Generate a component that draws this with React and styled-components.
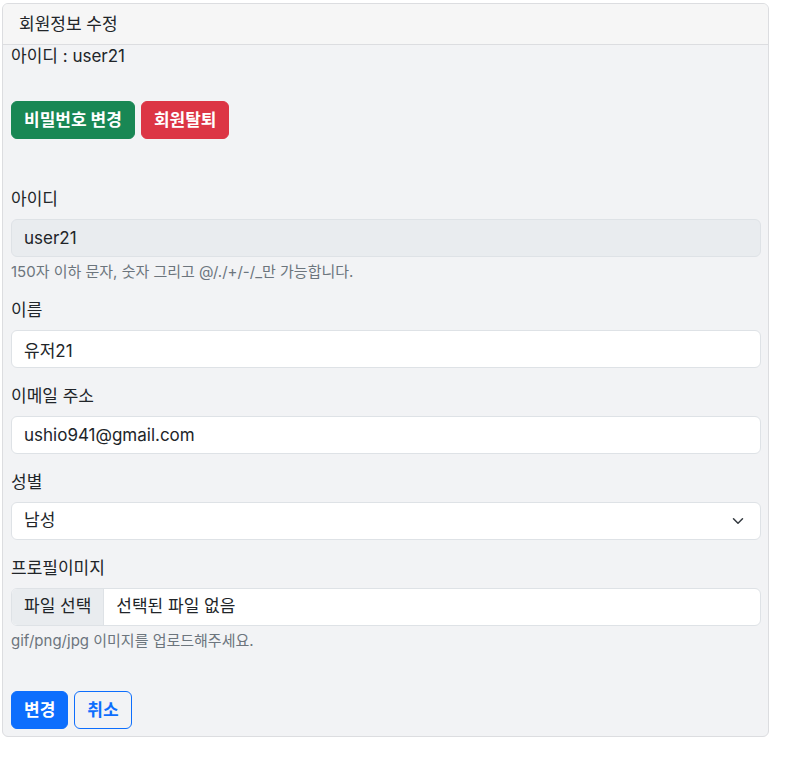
import styled, { createGlobalStyle } from "styled-components";

const GlobalStyle = createGlobalStyle`
  * {
    box-sizing: border-box;
  }
  body {
    margin: 0;
    background: #ffffff;
    color: #212529;
    font-family: Inter, "Noto Sans CJK KR", sans-serif;
    font-size: 17px;
    line-height: 1.5;
  }
`;

const App = () => {
  return (
    <Page>
      <GlobalStyle />
      <Card>
        <CardHeader>회원정보 수정</CardHeader>
        <CardBody>
          <UserLine>아이디 : user21</UserLine>
          <ActionRow>
            <Button $variant="success">비밀번호 변경</Button>
            <Button $variant="danger">회원탈퇴</Button>
          </ActionRow>

          <Field>
            <Label>아이디</Label>
            <Input value="user21" disabled readOnly />
            <Help>150자 이하 문자, 숫자 그리고 @/./+/-/_만 가능합니다.</Help>
          </Field>
          <Field>
            <Label>이름</Label>
            <Input value="유저21" readOnly />
          </Field>
          <Field>
            <Label>이메일 주소</Label>
            <Input value="ushio941@gmail.com" readOnly />
          </Field>
          <Field>
            <Label>성별</Label>
            <SelectBox>
              <span>남성</span>
              <svg width="16" height="16" viewBox="0 0 16 16">
                <path
                  d="M2 5l6 6 6-6"
                  fill="none"
                  stroke="#343a40"
                  strokeWidth="2"
                  strokeLinecap="round"
                  strokeLinejoin="round"
                />
              </svg>
            </SelectBox>
          </Field>
          <Field>
            <Label>프로필이미지</Label>
            <FileInput>
              <FileButton>파일 선택</FileButton>
              <FileName>선택된 파일 없음</FileName>
            </FileInput>
            <Help>gif/png/jpg 이미지를 업로드해주세요.</Help>
          </Field>

          <SubmitRow>
            <Button $variant="primary">변경</Button>
            <Button $variant="outline">취소</Button>
          </SubmitRow>
        </CardBody>
      </Card>
    </Page>
  );
};

const colors = {
  success: { bg: "#198754", fg: "#ffffff", border: "#198754" },
  danger: { bg: "#dc3545", fg: "#ffffff", border: "#dc3545" },
  primary: { bg: "#0d6efd", fg: "#ffffff", border: "#0d6efd" },
  outline: { bg: "transparent", fg: "#0d6efd", border: "#0d6efd" },
};

const Page = styled.div`
  padding: 3px 17px 20px 2px;
`;

const Card = styled.div`
  border: 1px solid #dcdde0;
  border-radius: 6px;
  background: #f2f3f5;
  overflow: hidden;
`;

const CardHeader = styled.div`
  padding: 8px 16px;
  background: #f6f6f6;
  border-bottom: 1px solid #dcdde0;
  line-height: 24px;
`;

const CardBody = styled.div`
  padding: 0 7px 7px 8px;
`;

const UserLine = styled.div`
  line-height: 22px;
`;

const ActionRow = styled.div`
  display: flex;
  gap: 6px;
  margin: 34px 0 48px;
`;

const Button = styled.button`
  font-family: inherit;
  font-size: 17px;
  font-weight: 700;
  line-height: 24px;
  padding: 6px 12px;
  border-radius: 6px;
  border: 1px solid ${(p) => colors[p.$variant].border};
  background: ${(p) => colors[p.$variant].bg};
  color: ${(p) => colors[p.$variant].fg};
`;

const Field = styled.div`
  margin-bottom: 16px;
`;

const Label = styled.div`
  line-height: 24px;
  margin-bottom: 8px;
`;

const Input = styled.input`
  display: block;
  width: 100%;
  height: 38px;
  padding: 6px 12px;
  font-family: inherit;
  font-size: 17px;
  color: #212529;
  background: ${(p) => (p.disabled ? "#e9ecef" : "#ffffff")};
  border: 1px solid #dee2e6;
  border-radius: 6px;
  &:disabled {
    color: #212529;
  }
`;

const SelectBox = styled.div`
  display: flex;
  align-items: center;
  justify-content: space-between;
  height: 38px;
  padding: 6px 16px 6px 12px;
  background: #ffffff;
  border: 1px solid #dee2e6;
  border-radius: 6px;
  svg {
    width: 12px;
    height: 12px;
  }
`;

const FileInput = styled.div`
  display: flex;
  height: 38px;
  background: #ffffff;
  border: 1px solid #dee2e6;
  border-radius: 6px;
  overflow: hidden;
`;

const FileButton = styled.div`
  display: flex;
  align-items: center;
  padding: 0 12px;
  background: #e9ecef;
  border-right: 1px solid #dee2e6;
`;

const FileName = styled.div`
  display: flex;
  align-items: center;
  padding: 0 12px;
`;

const Help = styled.div`
  margin-top: 4px;
  font-size: 15px;
  line-height: 21px;
  color: #6c757d;
`;

const SubmitRow = styled.div`
  display: flex;
  gap: 6px;
  margin-top: 40px;
`;

export default App;
